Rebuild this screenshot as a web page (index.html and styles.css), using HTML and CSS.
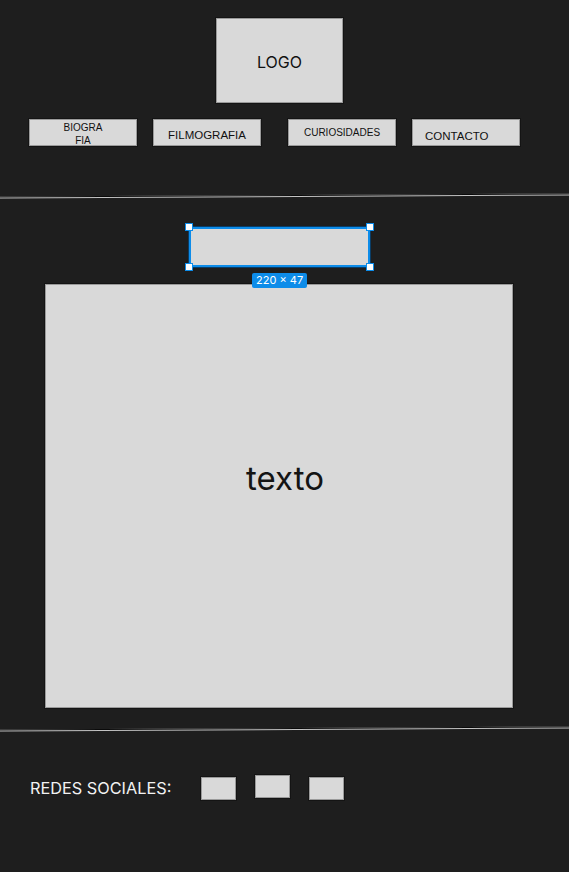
FILE: index.html
```html
<!DOCTYPE html>
<html lang="es">
<head>
<meta charset="utf-8">
<title>Wireframe</title>
<link rel="stylesheet" href="styles.css">
</head>
<body>
<header class="header">
  <div class="logo box">LOGO</div>
  <nav class="nav">
    <div class="btn box btn-bio">BIOGRA<br>FIA</div>
    <div class="btn box btn-film">FILMOGRAFIA</div>
    <div class="btn box btn-cur">CURIOSIDADES</div>
    <div class="btn box btn-con">CONTACTO</div>
  </nav>
</header>
<div class="rule rule-top"></div>
<main class="main">
  <div class="selected-wrap">
    <div class="selected box"></div>
    <span class="handle h-tl"></span>
    <span class="handle h-tr"></span>
    <span class="handle h-bl"></span>
    <span class="handle h-br"></span>
    <span class="badge">220 × 47</span>
  </div>
  <div class="content box">texto</div>
</main>
<div class="rule rule-bottom"></div>
<footer class="footer">
  <span class="social-label">REDES SOCIALES:</span>
  <div class="social box s1"></div>
  <div class="social box s2"></div>
  <div class="social box s3"></div>
</footer>
</body>
</html>
```
FILE: styles.css
```css
html, body {
  margin: 0;
  padding: 0;
}
body {
  background: #1e1e1e;
  width: 569px;
  height: 872px;
  overflow: hidden;
  font-family: "Liberation Sans", Arial, sans-serif;
  color: #111;
}
.box {
  background: #d9d9d9;
  border: 1px solid #9a9a9a;
  box-shadow: 0 0 0 1px #141414;
  box-sizing: border-box;
}
.header {
  padding-top: 18px;
  height: 195px;
  box-sizing: border-box;
}
.logo {
  width: 127px;
  height: 85px;
  margin-left: 216px;
  display: flex;
  align-items: center;
  justify-content: center;
  font-family: Inter, "Liberation Sans", sans-serif;
  font-size: 16px;
  padding-top: 2px;
}
.nav {
  display: flex;
  margin-top: 16px;
  padding-left: 29px;
}
.btn {
  width: 108px;
  height: 27px;
  display: flex;
  align-items: center;
  justify-content: center;
  text-align: center;
  line-height: 1.15;
}
.btn-bio {
  font-size: 10px;
  line-height: 13px;
  padding-top: 3px;
}
.btn-film {
  margin-left: 16px;
  font-size: 11.5px;
  padding-top: 6px;
}
.btn-cur {
  margin-left: 27px;
  font-size: 10px;
  padding-top: 1px;
}
.btn-con {
  margin-left: 16px;
  font-size: 11.5px;
  justify-content: flex-start;
  padding-left: 12px;
  padding-top: 8px;
}
.rule {
  height: 1px;
  background: #c4c4c4;
  border-top: 1px solid #0a0a0a;
  transform: rotate(-0.3deg);
}
.main {
  padding-top: 30px;
  height: 531px;
  box-sizing: border-box;
}
.selected-wrap {
  position: relative;
  width: 181px;
  height: 40px;
  margin-left: 189px;
}
.selected {
  width: 181px;
  height: 40px;
  border: 2px solid #0d8ce9;
  box-shadow: 0 0 0 1px #0a3d66;
}
.handle {
  position: absolute;
  width: 6px;
  height: 6px;
  background: #fff;
  border: 1px solid #0d8ce9;
}
.h-tl { left: -4px; top: -4px; }
.h-tr { right: -4px; top: -4px; }
.h-bl { left: -4px; bottom: -4px; }
.h-br { right: -4px; bottom: -4px; }
.badge {
  position: absolute;
  left: 63px;
  top: 46px;
  z-index: 2;
  background: #0d8ce9;
  color: #fff;
  font-family: Inter, "Liberation Sans", sans-serif;
  font-size: 11px;
  line-height: 15px;
  padding: 0 4px;
  border-radius: 2px;
  white-space: nowrap;
}
.content {
  margin-top: 17px;
  margin-left: 45px;
  width: 468px;
  height: 424px;
  display: flex;
  align-items: center;
  justify-content: center;
  font-family: Inter, "Liberation Sans", sans-serif;
  font-size: 33px;
  color: #141414;
  padding-left: 12px;
  padding-bottom: 36px;
}
.footer {
  display: flex;
  align-items: flex-start;
  padding-top: 45px;
  padding-left: 30px;
}
.social-label {
  font-family: Inter, "Liberation Sans", sans-serif;
  color: #f2f2f2;
  font-size: 16.3px;
  line-height: 20px;
  margin-top: 3px;
  width: 171px;
}
.social {
  width: 35px;
  height: 23px;
}
.s1 { margin-top: 2px; }
.s2 { margin-left: 19px; }
.s3 { margin-left: 19px; margin-top: 2px; }
```
